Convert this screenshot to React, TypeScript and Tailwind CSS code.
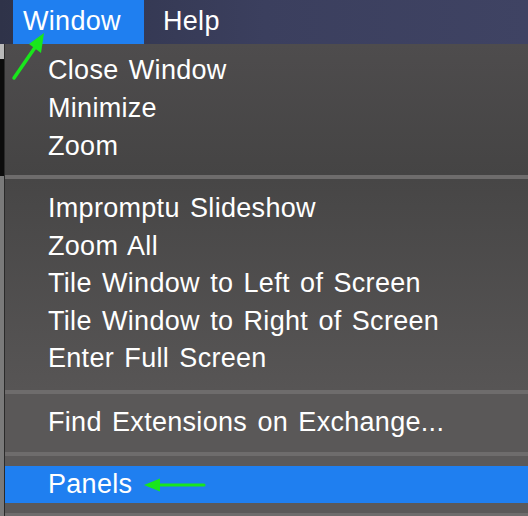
const font = {
  fontFamily: '"Helvetica Neue", "Liberation Sans", Arial, sans-serif',
  wordSpacing: "2.5px",
  letterSpacing: "0.3px",
};

function Item({ label, h = "h-[38px]" }: { label: string; h?: string }) {
  return (
    <div className={`flex ${h} items-center pl-[43px] text-[27px] leading-none text-white`}>
      {label}
    </div>
  );
}

function Separator() {
  return <div className="h-[4px] bg-[#6e6c6c]" />;
}

export default function App() {
  return (
    <div
      className="relative h-[516px] w-[528px] overflow-hidden bg-[#4a4848]"
      style={font}
    >
      {/* MENU BAR */}
      <div className="flex h-[44px] bg-gradient-to-r from-[#2f3349] via-[#3b3f5e] to-[#3f4363]">
        <div className="w-[13px]" />
        <div className="flex w-[131px] items-center bg-[#1f7ff0] pl-[10px] pb-[2px] text-[27px] text-white">
          Window
        </div>
        <div className="flex items-center pl-[19px] pb-[2px] text-[27px] text-white">
          Help
        </div>
      </div>

      <div className="flex">
        {/* LEFT EDGE */}
        <div className="flex w-[4px] flex-col">
          <div className="h-[15px] bg-[#b9b9b9]" />
          <div className="h-[117px] bg-[#0c0c0c]" />
          <div className="flex-1 bg-[#7a7a7a]" />
        </div>

        {/* MENU */}
        <div className="flex-1 border-l border-[#2a2a2a]">
          <div className="bg-gradient-to-b from-[#4e4c4d] to-[#454444] pt-[7px] pb-[10px]">
            <Item label="Close Window" />
            <Item label="Minimize" />
            <Item label="Zoom" />
          </div>
          <Separator />
          <div className="bg-gradient-to-b from-[#474646] to-[#575555] pt-[11px] pb-[12px]">
            <Item label="Impromptu Slideshow" h="h-[37.5px]" />
            <Item label="Zoom All" h="h-[37.5px]" />
            <Item label="Tile Window to Left of Screen" h="h-[37.5px]" />
            <Item label="Tile Window to Right of Screen" h="h-[37.5px]" />
            <Item label="Enter Full Screen" h="h-[37.5px]" />
          </div>
          <Separator />
          <div className="bg-[#5a5858] py-[10px]">
            <Item label="Find Extensions on Exchange..." />
          </div>
          <Separator />
          <div className="h-[10px] bg-[#5b5959]" />
          <div className="relative flex h-[37px] items-center bg-[#1f7ff0] pl-[43px] text-[27px] text-white">
            Panels
            <svg className="absolute left-[137px] top-[11px]" width="64" height="16" viewBox="0 0 64 16">
              <path d="M18 8 H62" stroke="#19e61c" strokeWidth="3" strokeLinecap="round" />
              <path d="M2 8 L18 1.5 L18 14.5 Z" fill="#19e61c" />
            </svg>
          </div>
          <div className="h-[10px] bg-[#5b5959]" />
          <div className="h-[3px] bg-[#6e6c6c]" />
        </div>
      </div>

      {/* ARROW TO WINDOW */}
      <svg className="absolute left-[8px] top-[28px]" width="44" height="56" viewBox="0 0 44 56">
        <path d="M6 50 L28 18" stroke="#19e61c" strokeWidth="3.5" strokeLinecap="round" />
        <path d="M36 5 L21 16 L33 25 Z" fill="#19e61c" />
      </svg>
    </div>
  );
}
